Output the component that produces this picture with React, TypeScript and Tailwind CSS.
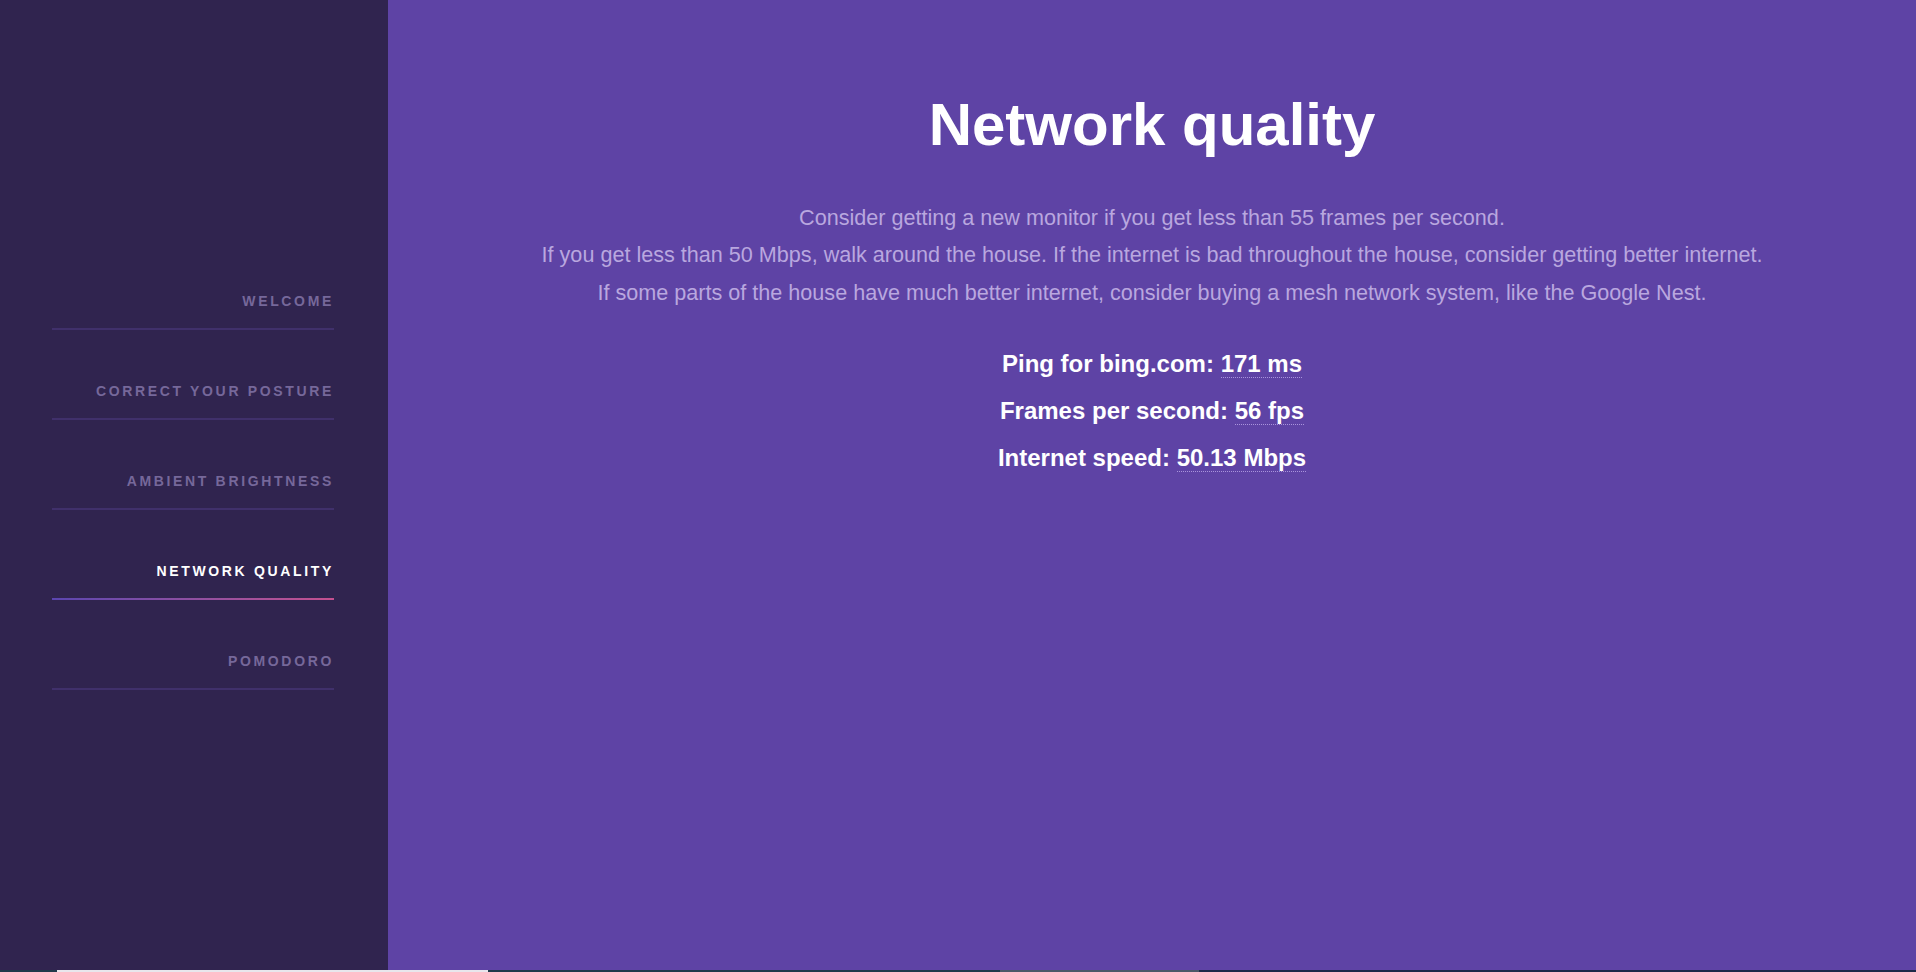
import React from "react";

const sections = [
  "Welcome",
  "Correct your posture",
  "Ambient brightness",
  "Network quality",
  "Pomodoro",
];

const NavItem = ({ label, active }: { label: string; active: boolean }) => {
  return (
    <div className="pt-[53px]">
      <div
        className={
          "text-right text-[14px] leading-[16px] font-bold uppercase tracking-[0.19em] pb-[19px] " +
          (active ? "text-white" : "text-[#76689a]")
        }
      >
        {label}
      </div>
      {active ? (
        <div className="h-[2px] bg-gradient-to-r from-[#5b45b0] to-[#c4508f]"></div>
      ) : (
        <div className="h-[2px] bg-[#40306b]"></div>
      )}
    </div>
  );
};

const Stat = ({ label, value }: { label: string; value: string }) => (
  <div className="text-[24px] leading-[47px] font-bold text-white">
    {label}:{" "}
    <span className="border-b border-dotted border-[#a994dc]">{value}</span>
  </div>
);

export default function App() {
  return (
    <div
      className="w-full h-[972px] flex flex-col overflow-hidden"
      style={{ fontFamily: '"Liberation Sans", Arial, sans-serif' }}
    >
      <div className="flex h-[970px]">
        <aside className="w-[388px] shrink-0 bg-[#30244f] pt-[240px] pl-[52px] pr-[54px]">
          {sections.map((s) => (
            <NavItem key={s} label={s} active={s === "Network quality"} />
          ))}
        </aside>
        <main className="flex-1 bg-[#5e43a5] text-center pt-[95px]">
          <h1 className="text-[60px] leading-[60px] font-bold text-white">
            Network quality
          </h1>
          <div className="mt-[44px] text-[21.6px] leading-[37.3px] text-[#b9a7df]">
            <p>Consider getting a new monitor if you get less than 55 frames per second.</p>
            <p>
              If you get less than 50 Mbps, walk around the house. If the internet is bad
              throughout the house, consider getting better internet.
            </p>
            <p>
              If some parts of the house have much better internet, consider buying a mesh
              network system, like the Google Nest.
            </p>
          </div>
          <div className="mt-[29px]">
            <Stat label="Ping for bing.com" value="171 ms" />
            <Stat label="Frames per second" value="56 fps" />
            <Stat label="Internet speed" value="50.13 Mbps" />
          </div>
        </main>
      </div>
      <div className="flex h-[2px]">
        <div className="w-[57px] bg-[#1f3a4a]"></div>
        <div className="w-[431px] bg-[#e8e6ec]"></div>
        <div className="w-[512px] bg-[#1f3a4a]"></div>
        <div className="w-[199px] bg-[#4b5a68]"></div>
        <div className="flex-1 bg-[#1e2a48]"></div>
      </div>
    </div>
  );
}
